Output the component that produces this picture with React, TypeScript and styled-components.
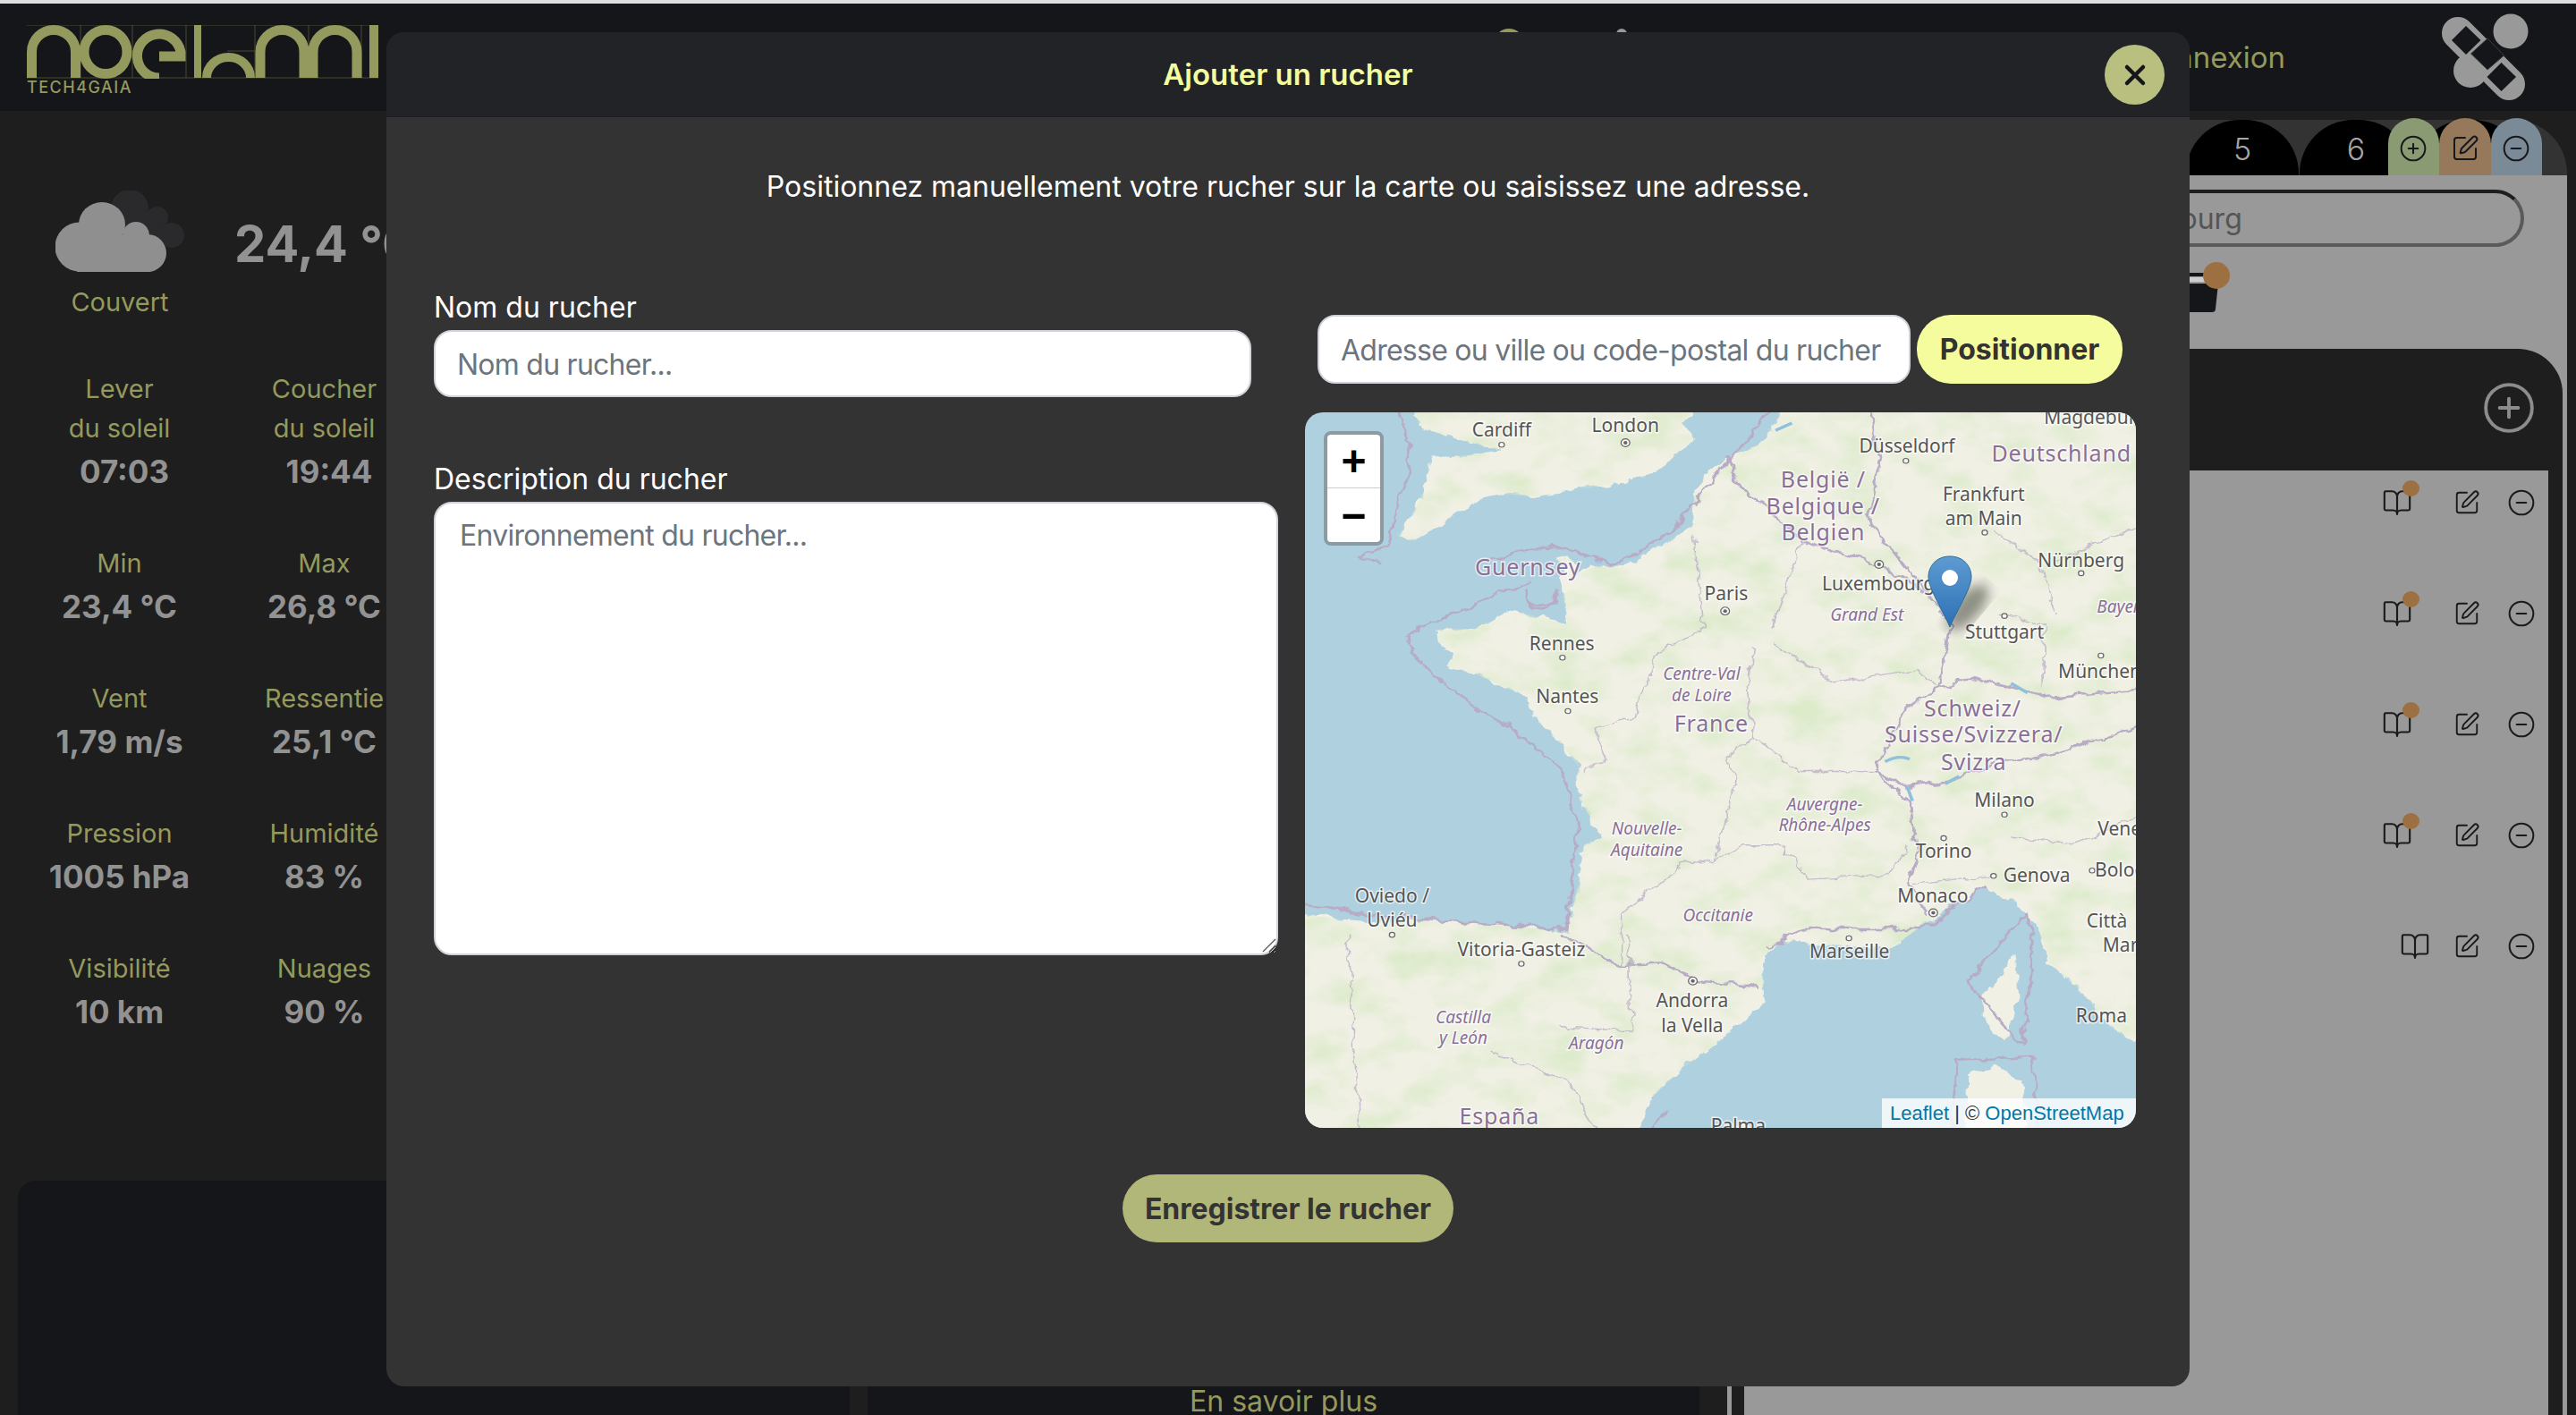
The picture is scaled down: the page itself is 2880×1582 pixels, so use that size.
import React from "react";
import styled, { createGlobalStyle } from "styled-components";
import { BookOpen, CircleMinus, CirclePlus, SquarePen, X } from "lucide-react";

const OLIVE = "#94995d";
const GREY = "#999999";
const INK = "#15161a";

const stats = [
  { label: ["Lever", "du soleil"], value: "07:03", nudge: true },
  { label: ["Coucher", "du soleil"], value: "19:44", nudge: true },
  { label: ["Min"], value: "23,4 °C" },
  { label: ["Max"], value: "26,8 °C" },
  { label: ["Vent"], value: "1,79 m/s" },
  { label: ["Ressentie"], value: "25,1 °C" },
  { label: ["Pression"], value: "1005 hPa" },
  { label: ["Humidité"], value: "83 %" },
  { label: ["Visibilité"], value: "10 km" },
  { label: ["Nuages"], value: "90 %" },
];

const hives = [true, true, true, true, false];

// positions below are read off the tile at its own scale, then brought back to the frame
const mx = (x: number) => (x - 31) / 1.633;
const my = (y: number) => (y - 38) / 1.823;

const MAINLAND =
  "M905 0L885 70L860 105L815 125L760 165L742 195L738 270L690 305L640 335L612 355L560 352L530 370L520 340L495 335L500 400L510 470L440 450L400 445L340 480L270 480L275 510L305 525L290 555L340 570L400 600L440 620L455 665L490 700L530 760L525 800L545 850L575 905L540 920L530 1000L510 1095L400 1085L250 1075L140 1075L0 1060V1530H630L660 1440L720 1375L800 1310L870 1240L865 1150L900 1115L1000 1125L1100 1130L1170 1075L1270 1005L1330 1040L1370 1090L1390 1160L1440 1210L1500 1290L1580 1345V0Z";
const BRITAIN =
  "M225 0L240 70L300 90L390 115L330 125L260 130L240 220L200 290L230 300L350 215L400 205L450 210L560 190L680 160L740 90L720 60L770 0Z";

const cityLabels: [string, number, number][] = [
  ["Cardiff", 390, 75], ["London", 616, 65], ["Düsseldorf", 1130, 108], ["Frankfurt", 1270, 205],
  ["am Main", 1270, 255], ["Nürnberg", 1448, 340], ["Paris", 800, 408], ["Luxembourg", 1078, 388],
  ["Stuttgart", 1308, 487], ["Rennes", 500, 510], ["Nantes", 510, 618], ["München", 1482, 566],
  ["Milano", 1308, 830], ["Torino", 1197, 933], ["Genova", 1367, 983], ["Bologna", 1540, 972],
  ["Venezia", 1540, 888], ["Monaco", 1177, 1024], ["Marseille", 1025, 1138], ["Oviedo /", 190, 1024],
  ["Uviéu", 190, 1074], ["Vitoria-Gasteiz", 426, 1133], ["Andorra", 738, 1238], ["la Vella", 738, 1288],
  ["Città", 1495, 1075], ["Marino", 1545, 1125], ["Roma", 1485, 1268], ["Palma", 822, 1492],
  ["Magdeburg", 1475, 48],
];

const countryLabels: [string, number, number][] = [
  ["Deutschland", 1412, 123], ["België /", 977, 177], ["Belgique /", 977, 231], ["Belgien", 977, 285],
  ["Guernsey", 438, 355], ["France", 773, 674], ["Schweiz/", 1250, 643], ["Suisse/Svizzera/", 1252, 697],
  ["Svizra", 1252, 752], ["España", 386, 1475],
];

const regionLabels: [string, number, number][] = [
  ["Grand Est", 1057, 451], ["Bayern", 1525, 435], ["Centre-Val", 755, 572], ["de Loire", 755, 616],
  ["Nouvelle-", 655, 888], ["Aquitaine", 655, 932], ["Auvergne-", 980, 838], ["Rhône-Alpes", 980, 880],
  ["Occitanie", 785, 1064], ["Castilla", 320, 1272], ["y León", 320, 1315], ["Aragón", 563, 1325],
];

const cityDots: [number, number, boolean][] = [
  [390, 104, false], [616, 100, true], [1128, 137, false], [1272, 283, false], [1448, 366, false],
  [798, 443, true], [1079, 348, true], [1308, 453, false], [501, 538, false], [511, 647, false],
  [1484, 534, false], [1308, 858, false], [1197, 906, false], [1288, 983, false], [1468, 972, false],
  [1178, 1058, true], [1024, 1110, false], [190, 1103, false], [426, 1162, false], [739, 1197, true],
];

const Noehmi = () => (
  <svg width="394" height="60" viewBox="0 0 394 60">
    <g fill="none" stroke="#5f6240" strokeWidth="0.7">
      <path d="M0 0H393M0 59H393M60 0V59M118 0V59M178 0V59M255 0V59M315 0V59M374 0V59M224 29H255" />
    </g>
    <g fill="none" stroke={OLIVE} strokeWidth="11">
      <path d="M5.5 59V30a24.5 24.5 0 0 1 49 0V59" />
      <ellipse cx="88" cy="30" rx="24" ry="24.5" />
      <path d="M148 59a24.5 24.5 0 1 1 24-29v5h-24" />
      <path d="M201 59a24.5 23 0 0 1 49 0" strokeWidth="10" />
      <path d="M261 59V30a24.5 24.5 0 0 1 49 0V59" />
      <path d="M320 59V30a24.5 24.5 0 0 1 49 0V59" />
    </g>
    <rect x="187" y="0" width="8" height="59" fill={OLIVE} />
    <rect x="383" y="0" width="10" height="59" fill={OLIVE} />
  </svg>
);

const Bandage = () => (
  <svg width="110" height="104" viewBox="0 0 110 104">
    <circle cx="82" cy="21" r="19.5" fill={GREY} />
    <circle cx="37" cy="65" r="19" fill={GREY} />
    <path d="M23 23L80 80" stroke={GREY} strokeWidth="36" strokeLinecap="round" />
    <path d="M32 15L48.5 31L32 47L16 31Z" fill={INK} />
    <path d="M71.5 56L88 72L71.5 88L55.5 72Z" fill={INK} />
    <path d="M56 29L74.5 48L56 64L37.5 46Z" fill={INK} stroke="#3d3e42" strokeWidth="1" />
  </svg>
);

const OvercastCloud = () => (
  <svg width="145" height="91" viewBox="0 0 145 91">
    <g fill="#2a2a2c">
      <circle cx="83" cy="20" r="21" />
      <circle cx="114" cy="30" r="12" />
      <circle cx="130" cy="50" r="14" />
      <circle cx="100" cy="42" r="20" />
    </g>
    <g fill="#8f8f8f">
      <circle cx="27" cy="63" r="27.5" />
      <ellipse cx="52" cy="38" rx="26" ry="25" />
      <circle cx="90" cy="50" r="15" />
      <circle cx="103" cy="70" r="21" />
      <rect x="24" y="50" width="82" height="41" />
    </g>
  </svg>
);

const Basket = () => (
  <svg width="50" height="48" viewBox="0 0 50 48">
    <rect x="0" y="0" width="40" height="4" fill={INK} />
    <rect x="0" y="5" width="30" height="5" fill="#cfcfcf" />
    <path d="M0 12H32L29 40a4 4 0 0 1-4 4H0Z" fill={INK} />
  </svg>
);

const FranceMap = () => (
  <MapSvg viewBox="0 0 929 800">
    <defs>
      <filter id="wiggle" x="-5%" y="-5%" width="110%" height="110%">
        <feTurbulence type="fractalNoise" baseFrequency="0.035" numOctaves="3" seed="8" result="n" />
        <feDisplacementMap in="SourceGraphic" in2="n" scale="22" xChannelSelector="R" yChannelSelector="G" />
        <feGaussianBlur stdDeviation="0.8" />
      </filter>
      <filter id="terrain" x="0" y="0" width="100%" height="100%">
        <feTurbulence type="fractalNoise" baseFrequency="0.011 0.016" numOctaves="5" seed="5" />
        <feColorMatrix values="0 0 0 0 0.72  0 0 0 0 0.83  0 0 0 0 0.60  0 0 0 2.4 -0.98" />
      </filter>
      <filter id="pin-shadow">
        <feGaussianBlur stdDeviation="7" />
      </filter>
      <clipPath id="land-clip">
        <path d={MAINLAND} />
        <path d={BRITAIN} />
      </clipPath>
      <linearGradient id="pin" x1="0" y1="0" x2="0" y2="1">
        <stop offset="0" stopColor="#5d9bd2" />
        <stop offset="1" stopColor="#2d70b6" />
      </linearGradient>
    </defs>
    <rect width="929" height="800" fill="#afd0de" />
    <g transform="scale(0.6124 0.5485) translate(-31 -38)">
      <g filter="url(#wiggle)" fill="#f1f0e5">
        <path d={MAINLAND} />
        <path d={BRITAIN} />
        <path d="M1325 1140L1335 1230L1310 1320L1280 1300L1262 1230L1300 1190Z" />
        <path d="M1240 1390L1290 1370L1340 1400L1355 1540H1235Z" />
        <path d="M790 1540L830 1478L885 1540Z" />
      </g>
      <g clipPath="url(#land-clip)">
        <rect x="0" y="0" width="1580" height="1530" filter="url(#terrain)" />
      </g>
      <g fill="none" stroke="#b8abc6" filter="url(#wiggle)" strokeLinejoin="round">
        <g strokeWidth="4.5">
          <path d="M800 130L830 190L940 300L1080 350L1170 410L1210 470L1185 600L1130 640L1070 770L1135 830L1150 950L1130 1000L1170 1060" />
          <path d="M495 1100L600 1165L680 1160L740 1195L860 1210" />
          <path d="M1060 0L1080 150L1060 260L1110 330L1170 410" />
          <path d="M1185 600L1260 580L1380 620L1580 600" />
          <path d="M1070 770L1130 800L1210 790L1300 750L1380 740L1580 670" />
          <path d="M220 490L400 400L440 385M220 490L225 530L330 630L420 690L500 770L530 870L510 1090L290 1075L130 1060L0 1030" />
          <path d="M360 340L480 310L600 350L700 280L810 130L905 0" />
          <path d="M195 0L225 130L180 310L130 330L170 345" />
          <path d="M870 1130L950 1090L1160 1090L1270 1005M1240 1200L1300 1120L1350 1060L1360 1140L1340 1330L1240 1200" />
          <path d="M1220 1360L1360 1350L1370 1530M1220 1360L1210 1530M650 1530L690 1460" />
          <path d="M435 400A28 28 0 1 0 490 400Q490 440 462 440Q435 440 435 400" />
        </g>
        <g strokeWidth="2.5" opacity="0.75">
          <path d="M740 290L760 480L680 520L630 660L560 680L580 750L540 770" />
          <path d="M850 520L840 600L850 700L800 740L820 790L790 900L780 950L720 960L610 1060L610 1165" />
          <path d="M850 700L930 770L1070 770M780 950L830 920L900 920L950 990L1100 980L1130 920" />
          <path d="M890 510L1000 590L1150 560L1185 600M880 480L940 300" />
          <path d="M1300 450L1380 470L1380 600M1290 280L1370 340L1400 450M1580 260L1400 340" />
          <path d="M110 1100L120 1300L130 1530M370 1340L510 1400L580 1530M620 1100L630 1300L500 1290" />
          <path d="M1320 900L1430 920L1580 850M1140 1000L1290 980" />
        </g>
      </g>
      <path
        d="M1090 750Q1115 735 1135 745M1200 795L1225 780M1320 590L1350 610M1130 800L1140 830M890 75L920 60"
        fill="none"
        stroke="#8fc0dc"
        strokeWidth="6"
      />
      {cityDots.map(([x, y, capital]) => (
        <g key={`${x}-${y}`} fill="#f5f5f5" stroke="#666" strokeWidth="2">
          <circle cx={x} cy={y} r={capital ? 8 : 5} />
          {capital && <circle cx={x} cy={y} r="3.5" fill="#666" stroke="none" />}
        </g>
      ))}
    </g>
    {cityLabels.map(([t, x, y]) => (
      <MapText key={t} x={mx(x)} y={my(y)} dy="7" $kind="city">
        {t}
      </MapText>
    ))}
    {countryLabels.map(([t, x, y]) => (
      <MapText key={t} x={mx(x)} y={my(y)} dy="8" $kind="country">
        {t}
      </MapText>
    ))}
    {regionLabels.map(([t, x, y]) => (
      <MapText key={t} x={mx(x)} y={my(y)} dy="6" $kind="region">
        {t}
      </MapText>
    ))}
    <ellipse
      cx="741"
      cy="218"
      rx="14"
      ry="32"
      fill="#000"
      opacity="0.4"
      filter="url(#pin-shadow)"
      transform="rotate(40 741 218)"
    />
    <path
      d="M721 161C705 161 697 173 697 184C697 197 714 223 721 240C728 223 745 197 745 184C745 173 737 161 721 161Z"
      fill="url(#pin)"
      stroke="#2e6c97"
      strokeWidth="1"
    />
    <circle cx="721" cy="185" r="9" fill="#fff" />
  </MapSvg>
);

const App = (): JSX.Element => (
  <Page>
    <GlobalStyle />
    <TopStrip />
    <Header>
      <Brand>
        <Noehmi />
        <Tagline>TECH4GAIA</Tagline>
      </Brand>
      <HeaderDome $size={34} $gap={103} $colour={OLIVE} />
      <HeaderDome $size={12} $gap={0} $colour={GREY} />
      <Login>Connexion</Login>
      <BandageSlot>
        <Bandage />
      </BandageSlot>
    </Header>
    <Main>
      <LeftColumn>
        <WeatherRow>
          <WeatherIcon>
            <OvercastCloud />
            <Condition>Couvert</Condition>
          </WeatherIcon>
          <Temperature>24,4 °C</Temperature>
        </WeatherRow>
        <StatGrid>
          {stats.map((s) => (
            <Stat key={s.value}>
              {s.label.map((l) => (
                <StatLabel key={l}>{l}</StatLabel>
              ))}
              <StatValue $nudge={!!s.nudge}>{s.value}</StatValue>
            </Stat>
          ))}
        </StatGrid>
        <BottomPanel />
      </LeftColumn>
      <MidColumn>
        <BottomPanel>
          <MoreLink>En savoir plus</MoreLink>
        </BottomPanel>
      </MidColumn>
      <RightColumn>
        <TabBar>
          {[1, 2, 3, 4, 5, 6, 7].map((n) => (
            <Tab key={n}>{n}</Tab>
          ))}
          <TabActions>
            <TabAction $colour="#8a9b74">
              <CirclePlus size={32} strokeWidth={1.5} />
            </TabAction>
            <TabAction $colour="#96795a">
              <SquarePen size={32} strokeWidth={1.5} />
            </TabAction>
            <TabAction $colour="#7b8a97">
              <CircleMinus size={32} strokeWidth={1.5} />
            </TabAction>
          </TabActions>
        </TabBar>
        <GreyPanel>
          <SearchBox readOnly value="Strasbourg" />
          <BasketRow>
            <Basket />
            <BasketDot />
          </BasketRow>
          <DarkPanel>
            <DarkHead>
              <CirclePlus size={62} strokeWidth={1.5} color="#8c8c8c" />
            </DarkHead>
            <HiveList>
              {hives.map((badge, i) => (
                <HiveRow key={i}>
                  <BookWrap $badge={badge}>
                    <BookOpen size={34} strokeWidth={1.5} />
                    {badge && <BookDot />}
                  </BookWrap>
                  <SquarePen size={30} strokeWidth={1.5} />
                  <CircleMinus size={32} strokeWidth={1.5} />
                </HiveRow>
              ))}
            </HiveList>
          </DarkPanel>
        </GreyPanel>
      </RightColumn>
    </Main>
    <Modal>
      <ModalHeader>
        <ModalTitle>Ajouter un rucher</ModalTitle>
        <CloseButton>
          <X size={36} strokeWidth={3} />
        </CloseButton>
      </ModalHeader>
      <ModalBody>
        <Intro>Positionnez manuellement votre rucher sur la carte ou saisissez une adresse.</Intro>
        <FormColumns>
          <FormLeft>
            <FieldLabel>Nom du rucher</FieldLabel>
            <NameInput placeholder="Nom du rucher..." />
            <FieldLabel>Description du rucher</FieldLabel>
            <DescriptionWrap>
              <DescriptionInput placeholder="Environnement du rucher..." />
              <ResizeGrip viewBox="0 0 16 16">
                <path d="M15 1L1 15M15 8L8 15" stroke="#555" strokeWidth="1.2" fill="none" />
              </ResizeGrip>
            </DescriptionWrap>
          </FormLeft>
          <FormRight>
            <AddressRow>
              <AddressInput placeholder="Adresse ou ville ou code-postal du rucher" />
              <LocateButton>Positionner</LocateButton>
            </AddressRow>
            <MapFrame>
              <FranceMap />
              <ZoomControl>
                <ZoomButton>+</ZoomButton>
                <ZoomButton>−</ZoomButton>
              </ZoomControl>
              <Attribution>
                <a>Leaflet</a> | © <a>OpenStreetMap</a>
              </Attribution>
            </MapFrame>
          </FormRight>
        </FormColumns>
        <SaveButton>Enregistrer le rucher</SaveButton>
      </ModalBody>
    </Modal>
  </Page>
);

const GlobalStyle = createGlobalStyle`
  html, body {
    margin: 0;
    padding: 0;
    background: #1e1e1e;
  }
  * {
    box-sizing: border-box;
  }
`;

const Page = styled.div`
  position: relative;
  display: flex;
  flex-direction: column;
  width: 2880px;
  height: 1582px;
  overflow: hidden;
  background: #1e1e1e;
  font-family: Inter, "Liberation Sans", sans-serif;
`;

const TopStrip = styled.div`
  height: 4px;
  background: #dfdfdf;
`;

const Header = styled.header`
  display: flex;
  align-items: flex-start;
  height: 120px;
  background: ${INK};
  padding: 0 45px 0 30px;
`;

const Brand = styled.div`
  display: flex;
  flex-direction: column;
  padding-top: 24px;
  width: 1640px;
`;

const Tagline = styled.div`
  font-size: 18px;
  line-height: 20px;
  font-weight: 500;
  letter-spacing: 1.5px;
  color: ${OLIVE};
`;

const HeaderDome = styled.div<{ $size: number; $gap: number; $colour: string }>`
  flex: none;
  width: ${(p) => p.$size}px;
  height: ${(p) => p.$size}px;
  margin-top: 28px;
  margin-right: ${(p) => p.$gap}px;
  border-radius: 50%;
  background: ${(p) => p.$colour};
`;

const Login = styled.div`
  margin: 38px 170px 0 auto;
  font-size: 33px;
  line-height: 44px;
  color: ${OLIVE};
`;

const BandageSlot = styled.div`
  margin-top: 10px;
`;

const Main = styled.main`
  display: flex;
  flex: 1;
  min-height: 0;
  padding: 0 10px 0 20px;
`;

const LeftColumn = styled.section`
  display: flex;
  flex-direction: column;
  flex: none;
  width: 930px;
`;

const MidColumn = styled.section`
  display: flex;
  flex-direction: column;
  justify-content: flex-end;
  flex: none;
  width: 930px;
  margin-left: 20px;
`;

const RightColumn = styled.section`
  display: flex;
  flex-direction: column;
  flex: 1;
  min-width: 0;
  margin-left: 31px;
  padding-top: 10px;
`;

const WeatherRow = styled.div`
  display: grid;
  grid-template-columns: 228px 1fr;
  padding-top: 89px;
  height: 289px;
`;

const WeatherIcon = styled.div`
  display: flex;
  flex-direction: column;
  align-items: center;
`;

const Condition = styled.div`
  margin-top: 12px;
  font-size: 29px;
  line-height: 44px;
  color: ${OLIVE};
`;

const Temperature = styled.div`
  padding: 28px 0 0 14px;
  font-size: 56px;
  line-height: 64px;
  font-weight: 700;
  color: #929292;
`;

const StatGrid = styled.div`
  display: grid;
  grid-template-columns: 229px 229px;
  row-gap: 57px;
  margin-left: -1px;
`;

const Stat = styled.div`
  display: flex;
  flex-direction: column;
  align-items: center;
  white-space: nowrap;
`;

const StatLabel = styled.div`
  font-size: 29px;
  line-height: 44px;
  color: ${OLIVE};
`;

const StatValue = styled.div<{ $nudge: boolean }>`
  margin-left: ${(p) => (p.$nudge ? 11 : 0)}px;
  padding-top: 2px;
  font-size: 35px;
  line-height: 48px;
  font-weight: 700;
  color: #929292;
`;

const BottomPanel = styled.div`
  display: flex;
  flex-direction: column;
  justify-content: flex-end;
  align-items: center;
  height: 262px;
  margin-top: auto;
  background: ${INK};
  border-radius: 20px 20px 0 0;
`;

const MoreLink = styled.div`
  margin-bottom: -2px;
  font-size: 32px;
  line-height: 34px;
  color: ${OLIVE};
`;

const TabBar = styled.div`
  position: relative;
  display: flex;
  align-items: stretch;
  gap: 1px;
  height: 62px;
  padding-left: 5px;
  background: #333;
  border-radius: 0 60px 0 0;
`;

const Tab = styled.div`
  display: flex;
  flex: none;
  align-items: center;
  justify-content: center;
  width: 126px;
  padding-top: 2px;
  background: #000;
  border-radius: 60px 60px 0 0;
  color: #a6a6a6;
  font-size: 34px;
  font-weight: 300;
`;

const TabActions = styled.div`
  position: absolute;
  right: 28px;
  bottom: 0;
  display: flex;
`;

const TabAction = styled.div<{ $colour: string }>`
  display: flex;
  align-items: center;
  justify-content: center;
  width: 57.5px;
  height: 64px;
  padding-top: 3px;
  background: ${(p) => p.$colour};
  border-radius: 29px 29px 0 0;
  color: #17181b;
`;

const GreyPanel = styled.div`
  display: flex;
  flex-direction: column;
  flex: 1;
  min-height: 0;
  background: ${GREY};
`;

const SearchBox = styled.input`
  display: block;
  height: 64px;
  margin: 16px 48px 0 40px;
  padding: 0 0 0 365px;
  background: transparent;
  border: 4px solid;
  border-color: #1e1e1e #5a5a5a #5a5a5a #1e1e1e;
  border-radius: 32px;
  outline: none;
  font-family: inherit;
  font-size: 32px;
  color: #555;
`;

const BasketRow = styled.div`
  position: relative;
  display: flex;
  justify-content: flex-end;
  height: 114px;
  padding: 29px 372px 0 0;
`;

const BasketDot = styled.div`
  position: absolute;
  top: 17px;
  right: 377px;
  width: 30px;
  height: 30px;
  border-radius: 50%;
  background: #9c7040;
`;

const DarkPanel = styled.div`
  display: flex;
  flex-direction: column;
  flex: 1;
  min-height: 0;
  margin: 0 5px;
  background: #1e1e1e;
  border-radius: 0 50px 0 0;
`;

const DarkHead = styled.div`
  display: flex;
  justify-content: flex-end;
  height: 136px;
  padding: 35px 29px 0 0;
`;

const HiveList = styled.div`
  display: flex;
  flex-direction: column;
  flex: 1;
  gap: 52px;
  margin: 0 16px 0 14px;
  padding-right: 14px;
  background: ${GREY};
`;

const HiveRow = styled.div`
  display: flex;
  align-items: center;
  justify-content: flex-end;
  gap: 30px;
  height: 72px;
  color: #1a1a1a;
`;

const BookWrap = styled.div<{ $badge: boolean }>`
  position: relative;
  display: flex;
  margin-right: ${(p) => (p.$badge ? 16 : -4)}px;
`;

const BookDot = styled.div`
  position: absolute;
  top: -8px;
  right: -8px;
  width: 19px;
  height: 18px;
  border-radius: 50%;
  background: #9c7040;
`;

const Modal = styled.div`
  position: absolute;
  top: 36px;
  left: 432px;
  display: flex;
  flex-direction: column;
  width: 2016px;
  height: 1514px;
  background: #333;
  border-radius: 20px;
`;

const ModalHeader = styled.div`
  position: relative;
  display: flex;
  align-items: center;
  justify-content: center;
  height: 95px;
  background: #212327;
  border-bottom: 1px solid #1d1e21;
  border-radius: 20px 20px 0 0;
`;

const ModalTitle = styled.div`
  font-size: 33px;
  font-weight: 600;
  color: #f4fc9d;
`;

const CloseButton = styled.button`
  position: absolute;
  top: 14px;
  right: 28px;
  display: flex;
  align-items: center;
  justify-content: center;
  width: 67px;
  height: 67px;
  padding: 0;
  border: none;
  border-radius: 50%;
  background: #b8bf7f;
  color: #15161a;
`;

const ModalBody = styled.div`
  display: flex;
  flex-direction: column;
  align-items: center;
  flex: 1;
`;

const Intro = styled.p`
  margin: 54px 0 0;
  font-size: 32px;
  line-height: 48px;
  color: #fff;
`;

const FormColumns = styled.div`
  display: grid;
  grid-template-columns: 944px 929px;
  column-gap: 30px;
  align-self: flex-start;
  margin: 91px 0 0 53px;
`;

const FormLeft = styled.div`
  display: flex;
  flex-direction: column;
  align-items: flex-start;
`;

const FormRight = styled.div`
  display: flex;
  flex-direction: column;
  padding-top: 28px;
`;

const FieldLabel = styled.label`
  height: 45px;
  font-size: 32px;
  line-height: 40px;
  color: #fff;
`;

const fieldStyle = `
  border: 2px solid #ced4da;
  border-radius: 20px;
  background: #fff;
  outline: none;
  font-family: inherit;
  font-size: 32px;
  letter-spacing: -0.75px;
  color: #212529;
  &::placeholder {
    color: #6c757d;
    opacity: 1;
  }
`;

const NameInput = styled.input`
  ${fieldStyle}
  width: 914px;
  height: 75px;
  margin-bottom: 72px;
  padding: 2px 24px 0;
`;

const DescriptionWrap = styled.div`
  position: relative;
  display: flex;
`;

const DescriptionInput = styled.textarea`
  ${fieldStyle}
  width: 944px;
  height: 507px;
  padding: 12px 27px;
  line-height: 48px;
`;

const ResizeGrip = styled.svg`
  position: absolute;
  right: 2px;
  bottom: 3px;
  width: 16px;
  height: 16px;
`;

const AddressRow = styled.div`
  display: flex;
  gap: 7px;
  height: 77px;
  margin: 0 0 32px 14px;
`;

const AddressInput = styled.input`
  ${fieldStyle}
  width: 663px;
  padding: 2px 24px 0;
`;

const pillStyle = `
  border: none;
  border-radius: 38px;
  font-family: inherit;
  font-size: 32px;
  font-weight: 700;
  color: #333;
`;

const LocateButton = styled.button`
  ${pillStyle}
  width: 230px;
  background: #f4fc9d;
`;

const MapFrame = styled.div`
  position: relative;
  width: 929px;
  height: 800px;
  overflow: hidden;
  border-radius: 20px;
`;

const MapSvg = styled.svg`
  display: block;
  width: 929px;
  height: 800px;
`;

const MapText = styled.text<{ $kind: "city" | "country" | "region" }>`
  font-family: "Noto Sans", sans-serif;
  text-anchor: middle;
  paint-order: stroke;
  stroke: rgba(255, 255, 255, 0.7);
  stroke-width: 3px;
  font-size: ${(p) => (p.$kind === "country" ? 25 : p.$kind === "city" ? 21 : 19)}px;
  font-style: ${(p) => (p.$kind === "region" ? "italic" : "normal")};
  letter-spacing: ${(p) => (p.$kind === "country" ? 0.8 : 0)}px;
  fill: ${(p) => (p.$kind === "city" ? "#555" : "#8a6f98")};
`;

const ZoomControl = styled.div`
  position: absolute;
  top: 21px;
  left: 21px;
  display: flex;
  flex-direction: column;
  width: 67px;
  border: 4px solid #8a9ba3;
  border-radius: 8px;
  background: #8a9ba3;
  overflow: hidden;
`;

const ZoomButton = styled.div`
  display: flex;
  align-items: center;
  justify-content: center;
  height: 60px;
  background: #fff;
  border-bottom: 1px solid #ccc;
  font-family: "Liberation Sans", sans-serif;
  font-size: 48px;
  font-weight: 700;
  color: #000;
  &:last-child {
    border-bottom: none;
  }
`;

const Attribution = styled.div`
  position: absolute;
  right: 0;
  bottom: 0;
  width: 284px;
  height: 33px;
  padding-left: 9px;
  background: rgba(255, 255, 255, 0.8);
  font-family: "Liberation Sans", sans-serif;
  font-size: 22px;
  line-height: 33px;
  color: #333;
  white-space: nowrap;
  a {
    color: #0078a8;
  }
`;

const SaveButton = styled.button`
  ${pillStyle}
  width: 370px;
  height: 76px;
  margin-top: 52px;
  background: #b1b778;
`;

export default App;
